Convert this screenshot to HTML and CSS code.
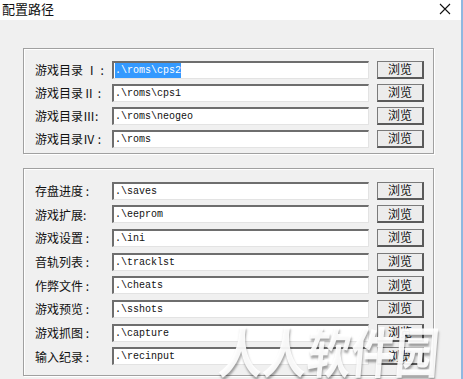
FILE: index.html
```html
<!DOCTYPE html>
<html lang="zh-CN">

<head>
    <meta charset="UTF-8">
    <title>配置路径</title>
    <link rel="stylesheet" href="styles.css">
</head>

<body>
    <div class="window">
        <!-- title bar -->
        <div class="titlebar">
            <span class="title">配置路径</span>
            <svg class="close" width="12" height="12" viewBox="0 0 12 12">
                <path d="M1 1 L11 11 M11 1 L1 11" stroke="#111" stroke-width="1.1" fill="none" />
            </svg>
        </div>

        <div class="content">
            <!-- rom folders -->
            <div class="group first">
                <div class="row">
                    <label>游戏目录 Ⅰ :</label>
                    <div class="field"><span class="selected">.\roms\cps2</span></div>
                    <button>浏览</button>
                </div>
                <div class="row">
                    <label>游戏目录Ⅱ :</label>
                    <div class="field">.\roms\cps1</div>
                    <button>浏览</button>
                </div>
                <div class="row">
                    <label>游戏目录Ⅲ:</label>
                    <div class="field">.\roms\neogeo</div>
                    <button>浏览</button>
                </div>
                <div class="row">
                    <label>游戏目录Ⅳ :</label>
                    <div class="field">.\roms</div>
                    <button>浏览</button>
                </div>
            </div>

            <!-- other folders -->
            <div class="group second">
                <div class="row">
                    <label>存盘进度 :</label>
                    <div class="field">.\saves</div>
                    <button>浏览</button>
                </div>
                <div class="row">
                    <label>游戏扩展:</label>
                    <div class="field">.\eeprom</div>
                    <button>浏览</button>
                </div>
                <div class="row">
                    <label>游戏设置 :</label>
                    <div class="field">.\ini</div>
                    <button>浏览</button>
                </div>
                <div class="row">
                    <label>音轨列表 :</label>
                    <div class="field">.\tracklst</div>
                    <button>浏览</button>
                </div>
                <div class="row">
                    <label>作弊文件 :</label>
                    <div class="field">.\cheats</div>
                    <button>浏览</button>
                </div>
                <div class="row">
                    <label>游戏预览 :</label>
                    <div class="field">.\sshots</div>
                    <button>浏览</button>
                </div>
                <div class="row">
                    <label>游戏抓图 :</label>
                    <div class="field">.\capture</div>
                    <button>浏览</button>
                </div>
                <div class="row">
                    <label>输入纪录 :</label>
                    <div class="field">.\recinput</div>
                    <button>浏览</button>
                </div>
            </div>
        </div>

        <div class="watermark">人人软件园</div>
    </div>
</body>

</html>
```

FILE: styles.css
```css
body {
    margin: 0;
    padding: 0;
    font-family: "Noto Sans CJK SC", "Noto Sans", sans-serif;
    background-color: #f0f0f0;
    overflow: hidden;
}

.window {
    position: relative;
    width: 461px;
    height: 379px;
    border-right: 2px solid #8fb8e0;
    background-color: #f0f0f0;
    overflow: hidden;
}

.titlebar {
    height: 20px;
    background-color: #fff;
    display: flex;
    align-items: flex-start;
    justify-content: space-between;
    padding: 0 10px 0 2px;
}

.title {
    font-size: 13px;
    color: #111;
    line-height: 17px;
}

.close {
    margin-top: 3px;
}

.content {
    padding: 28px 0 0 23px;
}

.group {
    width: 411px;
    border: 1px solid #a0a0a0;
    box-shadow: inset 1px 1px 0 #fff, 1px 1px 0 #fff;
    display: flex;
    flex-direction: column;
    box-sizing: border-box;
}

.group.first {
    height: 106px;
    padding-top: 11px;
    gap: 4px;
}

.group.second {
    margin-top: 14px;
    padding-top: 12px;
    gap: 4.7px;
    height: 208px;
}

.row {
    display: flex;
    align-items: center;
    height: 19px;
    padding-left: 11px;
}

label {
    width: 77px;
    font-size: 12px;
    color: #111;
    white-space: nowrap;
    line-height: 19px;
}

.field {
    width: 253px;
    height: 15px;
    background-color: #fff;
    border-top: 2px solid #6e6e6e;
    border-left: 2px solid #6e6e6e;
    border-bottom: 1px solid #e3e3e3;
    border-right: 1px solid #e3e3e3;
    font-family: "Liberation Mono", monospace;
    font-size: 10px;
    line-height: 15px;
    color: #111;
    padding-left: 1px;
    white-space: nowrap;
}

.selected {
    background-color: #3399ff;
    color: #fff;
    display: inline-block;
    height: 15px;
}

button {
    width: 47px;
    height: 18px;
    margin-left: 8px;
    padding: 0;
    background-color: #ececec;
    border: 1px solid #7a7a7a;
    border-right: 2px solid #5a5a5a;
    border-bottom: 2px solid #5a5a5a;
    font-family: "Noto Sans CJK SC", sans-serif;
    font-size: 12px;
    line-height: 14px;
    color: #111;
}

.watermark {
    position: absolute;
    left: 222px;
    top: 318px;
    font-size: 44px;
    font-weight: bold;
    color: rgba(255, 255, 255, 0.92);
    text-shadow: 1px 2px 2px rgba(0, 0, 0, 0.35);
    white-space: nowrap;
    line-height: 50px;
    transform: scaleY(1.25) skewX(-6deg);
    transform-origin: top left;
}
```
